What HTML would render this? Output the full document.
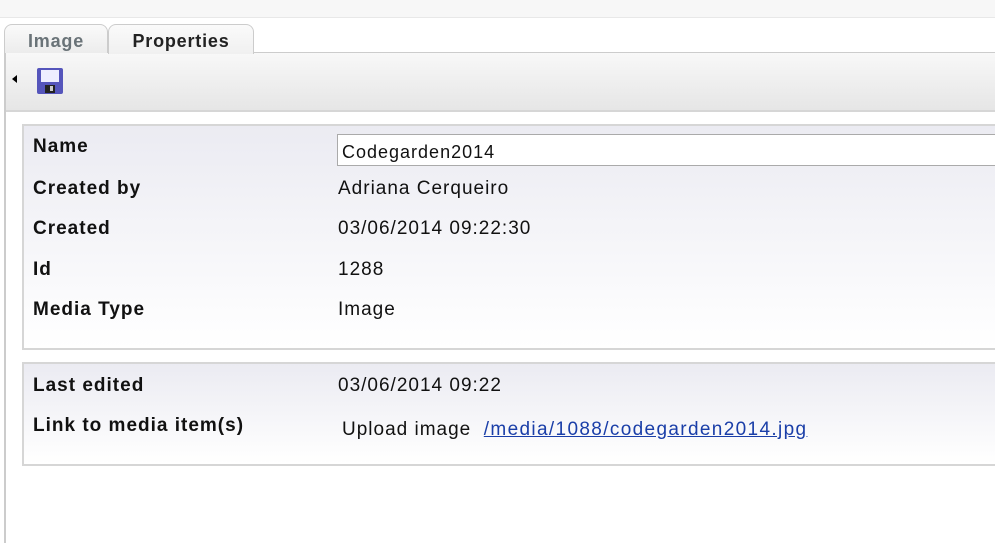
<!DOCTYPE html>
<html><head><style>
body{margin:0;width:995px;height:533px;overflow:hidden;background:#fff;font-family:"Liberation Sans",sans-serif;position:relative}
.top{position:absolute;left:0;top:0;width:995px;height:17px;background:#f7f7f7;border-bottom:1px solid #e8e8e8}
.tab{position:absolute;top:24px;height:29px;border:1px solid #ccc;border-bottom:none;border-radius:8px 8px 0 0;font-size:18px;font-weight:bold;box-sizing:border-box;padding-top:6px;text-align:center;letter-spacing:0.8px}
.frame{position:absolute;left:4px;top:52px;width:1000px;height:490px;border-left:2px solid #ccc;border-top:1px solid #ccc}
.tool{position:absolute;left:6px;top:53px;width:990px;height:57px;background:linear-gradient(#f8f8f8,#e6e6e6);border-bottom:2px solid #d6d6d6}
.panel{position:absolute;left:22px;width:980px;border:2px solid #d6d6d6;background:linear-gradient(#ebebf2,#fff);box-sizing:border-box}
.l{position:absolute;left:33px;font-weight:bold;font-size:19px;color:#111;letter-spacing:1px}
.v{position:absolute;left:338px;font-size:19px;color:#111;letter-spacing:1px}
</style></head><body>
<div class="top"></div>
<div class="frame"></div>
<div class="tool"></div>
<div class="tab" style="left:4px;width:104px;background:linear-gradient(#fafafa,#ececec);color:#6a7378">Image</div>
<div class="tab" style="left:108px;width:146px;background:linear-gradient(#fafafa,#f0f0f0);color:#222;height:30px">Properties</div>
<div style="position:absolute;left:12px;top:75px;width:0;height:0;border-top:4px solid transparent;border-bottom:4px solid transparent;border-right:5px solid #000"></div>
<svg style="position:absolute;left:37px;top:68px" width="26" height="26" viewBox="0 0 26 26"><rect x="0" y="0" width="26" height="26" rx="2" fill="#5555bb"/><rect x="4" y="2" width="18" height="12" fill="#eef"/><rect x="8" y="17" width="10" height="8" fill="#222"/><rect x="13" y="18" width="3" height="5" fill="#ccc"/></svg>
<div class="panel" style="top:124px;height:226px"></div>
<div class="panel" style="top:362px;height:104px"></div>
<div style="position:absolute;left:337px;top:134px;width:670px;height:32px;border:1px solid #aaa;background:#fff;box-sizing:border-box"></div>
<div class="v" style="top:142px;left:342px;font-size:18px">Codegarden2014</div>
<div class="l" style="top:136px">Name</div>
<div class="l" style="top:178px">Created by</div><div class="v" style="top:178px">Adriana Cerqueiro</div>
<div class="l" style="top:218px">Created</div><div class="v" style="top:218px">03/06/2014 09:22:30</div>
<div class="l" style="top:259px">Id</div><div class="v" style="top:259px">1288</div>
<div class="l" style="top:299px">Media Type</div><div class="v" style="top:299px">Image</div>
<div class="l" style="top:375px">Last edited</div><div class="v" style="top:375px">03/06/2014 09:22</div>
<div class="l" style="top:415px">Link to media item(s)</div>
<div class="v" style="top:419px;left:342px">Upload image &nbsp;<span style="color:#1a3ea8;text-decoration:underline;letter-spacing:1.35px">/media/1088/codegarden2014.jpg</span></div>
</body></html>
